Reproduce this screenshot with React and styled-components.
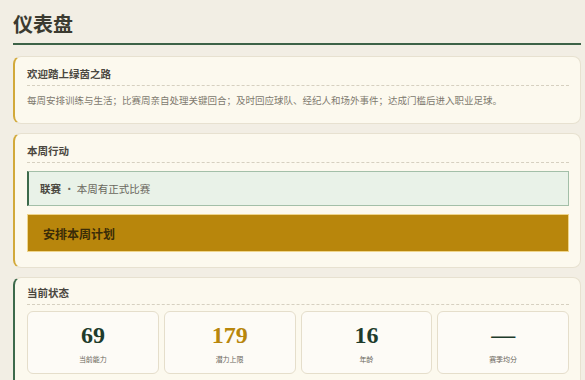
import React from "react";
import styled, { createGlobalStyle } from "styled-components";

const Global = createGlobalStyle`
  html, body { margin: 0; padding: 0; background: #f2eee4; }
  body { font-family: "Noto Sans CJK SC", "Noto Sans", sans-serif; overflow: hidden; }
  * { box-sizing: border-box; }
`;

const Page = styled.div`
  padding: 11px 4px 0 13px;
  display: flex;
  flex-direction: column;
  gap: 9px;
`;

const Title = styled.h1`
  margin: 0 0 2px;
  font-size: 20px;
  font-weight: 700;
  line-height: 26px;
  color: #3b3a30;
  padding-bottom: 6px;
  border-bottom: 2px solid #3d6247;
`;

const Card = styled.section`
  background: #fcf9ee;
  border: 1px solid #e7e1d0;
  border-left: 2px solid ${(p) => p.$accent};
  border-radius: 8px;
  padding: ${(p) => p.$pt}px 11px ${(p) => p.$pb}px 12px;
  display: flex;
  flex-direction: column;
`;

const CardHead = styled.h2`
  margin: 0 0 ${(p) => p.$gap}px;
  font-size: 10.5px;
  font-weight: 700;
  color: #4a4740;
  line-height: 16px;
  padding-bottom: 3px;
  border-bottom: 1px dashed #d6d0c0;
`;

const Body = styled.p`
  margin: 0;
  font-size: 9.5px;
  color: #807a6e;
  line-height: 14px;
`;

const Notice = styled.div`
  background: #e9f2e8;
  border: 1px solid #a3bfa8;
  border-left: 2px solid #3d6a4b;
  height: 35px;
  display: flex;
  align-items: center;
  padding-left: 11px;
  font-size: 10.5px;
  color: #6a675e;
  margin-bottom: 8px;
  b { color: #4a473f; font-weight: 700; margin-right: 3px; }
`;

const PlanButton = styled.button`
  background: #b8860c;
  border: 1px solid #efd58c;
  height: 38px;
  width: 100%;
  text-align: left;
  padding-left: 15px;
  font-family: inherit;
  font-size: 12px;
  font-weight: 700;
  color: #3a2c08;
`;

const Stats = styled.div`
  display: grid;
  grid-template-columns: repeat(4, 1fr);
  gap: 5px;
`;

const Stat = styled.div`
  background: #fdfbf6;
  border: 1px solid #e5decb;
  border-radius: 6px;
  height: 63px;
  display: flex;
  flex-direction: column;
  align-items: center;
  padding-top: 8px;
`;

const Num = styled.div`
  font-family: "Liberation Serif", "DejaVu Serif", serif;
  font-weight: 700;
  font-size: 24px;
  line-height: 30px;
  color: ${(p) => p.$color};
`;

const Label = styled.div`
  font-size: 7px;
  color: #6a665c;
  line-height: 10px;
  margin-top: 4px;
`;

const stats = [
  { n: "69", l: "当前能力", c: "#1e3b2b" },
  { n: "179", l: "潜力上限", c: "#b8860c" },
  { n: "16", l: "年龄", c: "#1e3b2b" },
  { n: "—", l: "赛季均分", c: "#1e3b2b" },
];

export default function App() {
  return (
    <Page>
      <Global />
      <Title>仪表盘</Title>
      <Card $accent="#d2a93a" $pt={9} $pb={16}>
        <CardHead $gap={7}>欢迎踏上绿茵之路</CardHead>
        <Body>每周安排训练与生活；比赛周亲自处理关键回合；及时回应球队、经纪人和场外事件；达成门槛后进入职业足球。</Body>
      </Card>
      <Card $accent="#d2a93a" $pt={9} $pb={15}>
        <CardHead $gap={8}>本周行动</CardHead>
        <Notice><b>联赛</b>· 本周有正式比赛</Notice>
        <PlanButton>安排本周计划</PlanButton>
      </Card>
      <Card $accent="#3d6a4b" $pt={7} $pb={16}>
        <CardHead $gap={6}>当前状态</CardHead>
        <Stats>
          {stats.map((s) => (
            <Stat key={s.l}>
              <Num $color={s.c}>{s.n}</Num>
              <Label>{s.l}</Label>
            </Stat>
          ))}
        </Stats>
      </Card>
    </Page>
  );
}
